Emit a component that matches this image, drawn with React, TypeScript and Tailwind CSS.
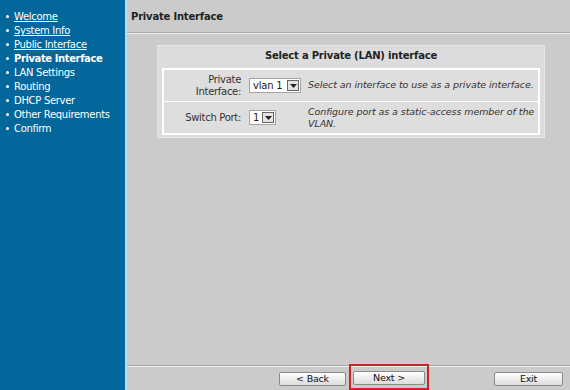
import React from "react";

const navItems = [
  { label: "Welcome", link: true },
  { label: "System Info", link: true },
  { label: "Public Interface", link: true },
  { label: "Private Interface", active: true },
  { label: "LAN Settings" },
  { label: "Routing" },
  { label: "DHCP Server" },
  { label: "Other Requirements" },
  { label: "Confirm" },
];

// Old-school select box with the grey arrow button
const FakeSelect = ({ value, width }: { value: string; width: string }) => (
  <div className={`flex h-[15px] items-stretch border border-[#a5a5a5] bg-white ${width}`}>
    <span className="flex-1 whitespace-nowrap pl-[3px] text-[10px] leading-[13px] tracking-[-0.2px] text-[#222]">
      {value}
    </span>
    <span className="m-[1px] flex w-[12px] items-center justify-center border border-[#666] bg-[#e4e4e4]">
      <svg width="7" height="4" viewBox="0 0 7 4">
        <path d="M0 0h7L3.5 4z" fill="#222" />
      </svg>
    </span>
  </div>
);

const Btn = ({ children, width }: { children: React.ReactNode; width: string }) => (
  <button
    className={`h-[14px] ${width} rounded-[2px] border border-[#8a8a8a] bg-gradient-to-b from-white to-[#dcdcdc] text-[9.5px] leading-[12px] tracking-[-0.2px] text-[#111]`}
  >
    {children}
  </button>
);

export default function App() {
  return (
    <div
      className="flex h-[390px] w-[570px] overflow-hidden text-[10px]"
      style={{ fontFamily: '"DejaVu Sans", Verdana, sans-serif' }}
    >
      {/* Sidebar */}
      <div className="w-[127px] shrink-0 border-r-2 border-[#b8dcee] bg-[#03679b] pl-[6px] pt-[10px]">
        <ul className="flex flex-col">
          {navItems.map((item) => (
            <li
              key={item.label}
              className="flex h-[13.9px] items-center gap-[5px] text-[10px] tracking-[-0.3px] text-white"
            >
              <span className="h-[3px] w-[3px] rounded-full bg-white" />
              <span className={item.active ? "font-bold tracking-[-0.4px]" : item.link ? "underline" : ""}>
                {item.label}
              </span>
            </li>
          ))}
        </ul>
      </div>

      {/* Main area */}
      <div className="flex flex-1 flex-col bg-[#cbcbcb]">
        <div className="flex h-[32px] items-center px-[4px] text-[10px] font-bold tracking-[-0.2px] text-[#222]">
          Private Interface
        </div>
        <div className="h-px bg-[#a9a9a9]" />
        <div className="h-px bg-[#f0f0f0]" />

        <div className="flex flex-1 justify-center pt-[11px]">
          <div className="ml-[5px] h-[93px] w-[388px] border border-[#e6e6e6] bg-[#dcdcdc] px-[4px] pt-[3px]">
            <div className="mb-[5px] text-center text-[10px] font-bold leading-[14px] tracking-[-0.2px] text-[#222]">
              Select a Private (LAN) interface
            </div>
            <div className="border-2 border-white bg-[#dedede]">
              <div className="flex h-[32px] items-center border-b border-white">
                <div className="w-[77px] text-right leading-[12px] tracking-[-0.3px] text-[#333]">
                  Private
                  <br />
                  Interface:
                </div>
                <div className="ml-[8px] w-[59px]">
                  <FakeSelect value="vlan 1" width="w-[52px]" />
                </div>
                <div className="whitespace-nowrap text-[9.5px] italic tracking-[-0.08px] text-[#333]">
                  Select an interface to use as a private interface.
                </div>
              </div>
              <div className="flex h-[31px] items-center">
                <div className="w-[77px] text-right tracking-[-0.3px] text-[#333]">Switch Port:</div>
                <div className="ml-[8px] w-[59px]">
                  <FakeSelect value="1" width="w-[27px]" />
                </div>
                <div className="whitespace-nowrap text-[9.5px] italic leading-[12px] tracking-[-0.08px] text-[#333]">
                  Configure port as a static-access member of the
                  <br />
                  VLAN.
                </div>
              </div>
            </div>
          </div>
        </div>

        {/* Footer */}
        <div className="h-px bg-[#a9a9a9]" />
        <div className="h-px bg-[#f0f0f0]" />
        <div className="flex h-[23px] items-center">
          <div className="ml-[152px]">
            <Btn width="w-[67px]">&lt; Back</Btn>
          </div>
          <div className="-mt-[4px] ml-[3px] border-2 border-[#d0202a] px-[2px] pb-[3px] pt-[4px]">
            <Btn width="w-[72px]">Next &gt;</Btn>
          </div>
          <div className="ml-auto mr-[7px]">
            <Btn width="w-[69px]">Exit</Btn>
          </div>
        </div>
      </div>
    </div>
  );
}
